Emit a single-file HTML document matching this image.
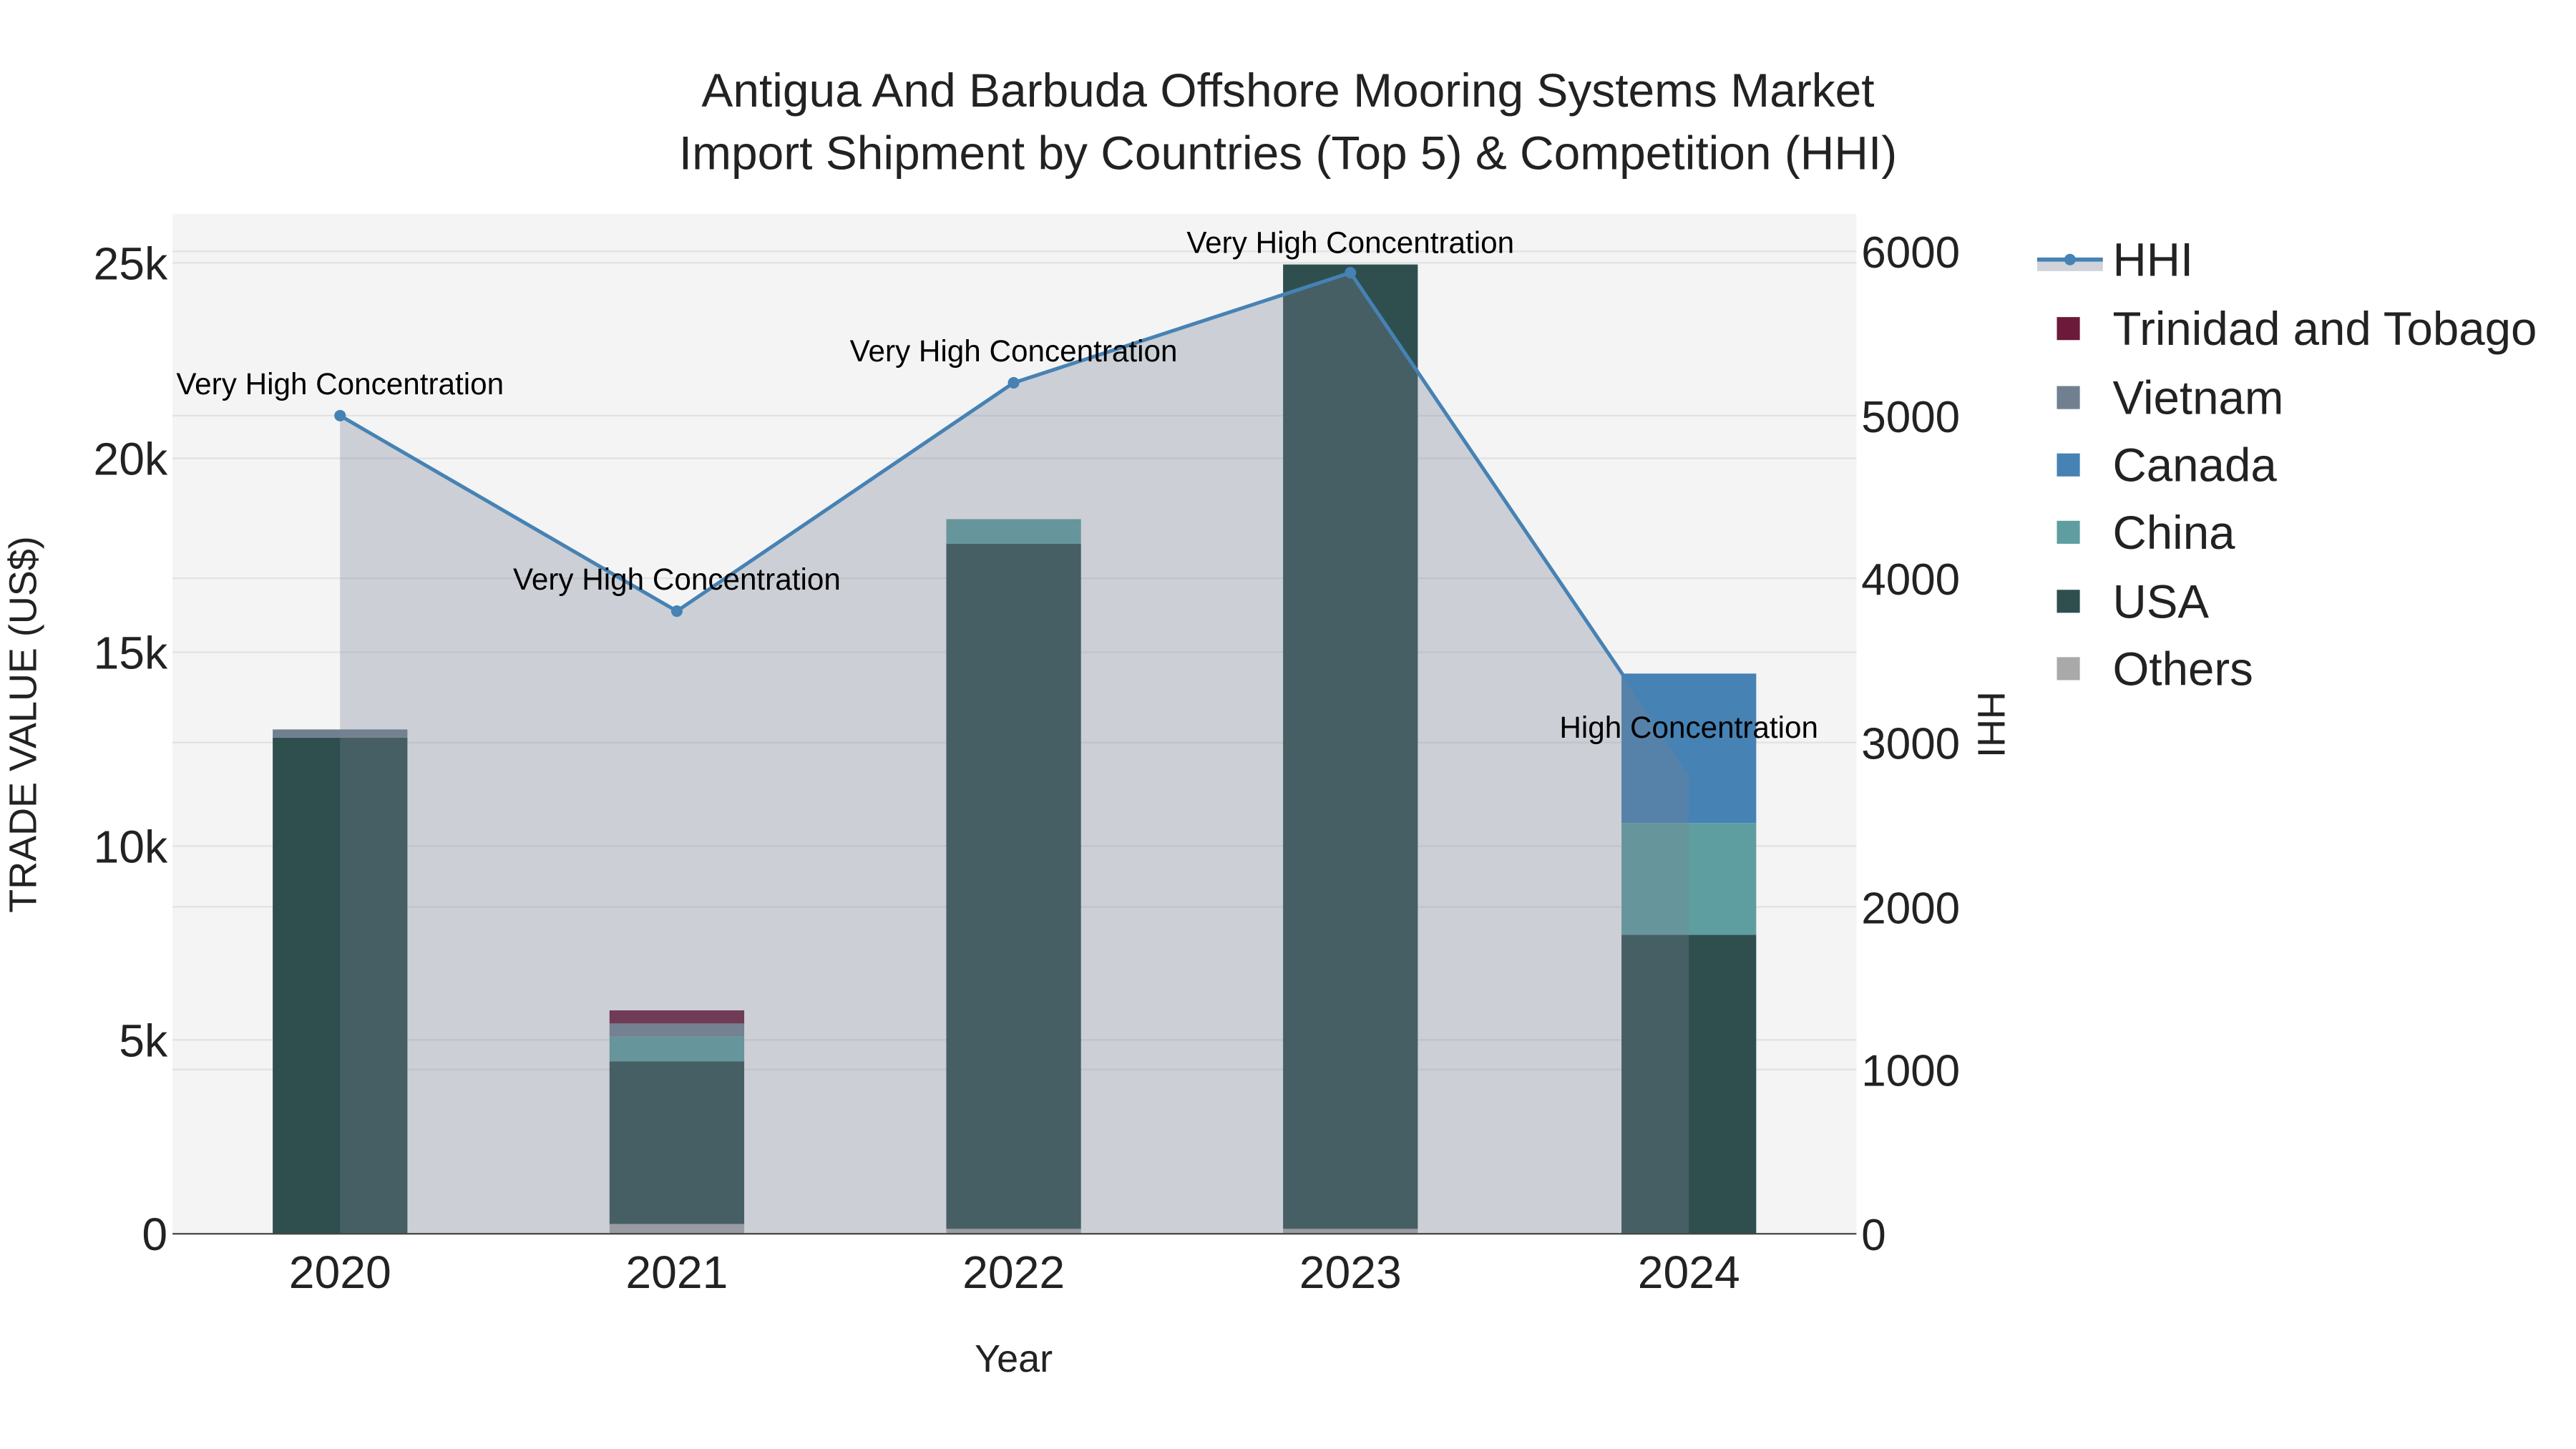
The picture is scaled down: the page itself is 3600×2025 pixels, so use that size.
<!DOCTYPE html>
<html><head><meta charset="utf-8"><style>html,body{margin:0;padding:0;background:#fff}svg{display:block}</style></head>
<body>
<svg width="3600" height="2025" viewBox="0 0 1568 882" xmlns="http://www.w3.org/2000/svg" font-family="Liberation Sans, sans-serif">
<rect width="1568" height="882" fill="#fff"/>
<rect x="105" y="130" width="1025" height="621" fill="#f4f4f4"/>
<g stroke="#e2e2e2" stroke-width="1">
<line x1="105" x2="1130" y1="633" y2="633"/><line x1="105" x2="1130" y1="515" y2="515"/><line x1="105" x2="1130" y1="397" y2="397"/><line x1="105" x2="1130" y1="279" y2="279"/><line x1="105" x2="1130" y1="160" y2="160"/>
<line x1="105" x2="1130" y1="651" y2="651"/><line x1="105" x2="1130" y1="552" y2="552"/><line x1="105" x2="1130" y1="452" y2="452"/><line x1="105" x2="1130" y1="352" y2="352"/><line x1="105" x2="1130" y1="253" y2="253"/><line x1="105" x2="1130" y1="153" y2="153"/>
</g>
<g>
<rect x="166" y="449" width="82" height="302" fill="#2f4f4f"/><rect x="166" y="444" width="82" height="5" fill="#708090"/>
<rect x="371" y="745" width="82" height="6" fill="#a9a9a9"/><rect x="371" y="646" width="82" height="99" fill="#2f4f4f"/><rect x="371" y="631" width="82" height="15" fill="#5f9ea0"/><rect x="371" y="623" width="82" height="8" fill="#708090"/><rect x="371" y="615" width="82" height="8" fill="#6b1a3a"/>
<rect x="576" y="748" width="82" height="3" fill="#a9a9a9"/><rect x="576" y="331" width="82" height="417" fill="#2f4f4f"/><rect x="576" y="316" width="82" height="15" fill="#5f9ea0"/>
<rect x="781" y="748" width="82" height="3" fill="#a9a9a9"/><rect x="781" y="161" width="82" height="587" fill="#2f4f4f"/>
<rect x="987" y="569" width="82" height="182" fill="#2f4f4f"/><rect x="987" y="501" width="82" height="68" fill="#5f9ea0"/><rect x="987" y="410" width="82" height="91" fill="#4682b4"/>
</g>
<path d="M207,253 L412,372 L617,233 L822,166 L1028,470 L1028,751 L207,751 Z" fill="rgba(120,130,150,0.32)"/>
<polyline points="207,253 412,372 617,233 822,166 1028,470" fill="none" stroke="#4682b4" stroke-width="2.2"/>
<g fill="#4682b4"><circle cx="207" cy="253" r="3.5"/><circle cx="412" cy="372" r="3.5"/><circle cx="617" cy="233" r="3.5"/><circle cx="822" cy="166" r="3.5"/></g>
<line x1="105" x2="1130" y1="751" y2="751" stroke="#444" stroke-width="1"/>
<g font-size="18.4" fill="#000" text-anchor="middle">
<text x="207" y="240">Very High Concentration</text><text x="412" y="359">Very High Concentration</text><text x="617" y="220">Very High Concentration</text><text x="822" y="154">Very High Concentration</text><text x="1028" y="449">High Concentration</text>
</g>
<g font-size="28" fill="#222" text-anchor="end">
<text x="102" y="761">0</text><text x="102" y="643">5k</text><text x="102" y="525">10k</text><text x="102" y="407">15k</text><text x="102" y="289">20k</text><text x="102" y="170">25k</text>
</g>
<g font-size="27" fill="#222" text-anchor="start">
<text x="1133" y="761">0</text><text x="1133" y="661">1000</text><text x="1133" y="562">2000</text><text x="1133" y="462">3000</text><text x="1133" y="362">4000</text><text x="1133" y="263">5000</text><text x="1133" y="163">6000</text>
</g>
<g font-size="28" fill="#222" text-anchor="middle">
<text x="207" y="784">2020</text><text x="412" y="784">2021</text><text x="617" y="784">2022</text><text x="822" y="784">2023</text><text x="1028" y="784">2024</text>
</g>
<text x="617" y="835" font-size="23.5" fill="#222" text-anchor="middle">Year</text>
<text transform="translate(22,441) rotate(-90)" font-size="23.5" fill="#222" text-anchor="middle">TRADE VALUE (US$)</text>
<text transform="translate(1204,441) rotate(90)" font-size="23.5" fill="#222" text-anchor="middle">HHI</text>
<g font-size="28.7" fill="#222" text-anchor="middle">
<text x="784" y="65">Antigua And Barbuda Offshore Mooring Systems Market</text>
<text x="784" y="103">Import Shipment by Countries (Top 5) &amp; Competition (HHI)</text>
</g>
<rect x="1240" y="157" width="40" height="8" fill="rgba(120,130,150,0.35)"/>
<line x1="1240" x2="1280" y1="158" y2="158" stroke="#4682b4" stroke-width="2.5"/><circle cx="1260" cy="158" r="3.5" fill="#4682b4"/>
<g>
<rect x="1252" y="193" width="14" height="14" fill="#6b1a3a"/><rect x="1252" y="235" width="14" height="14" fill="#708090"/><rect x="1252" y="276" width="14" height="14" fill="#4682b4"/><rect x="1252" y="317" width="14" height="14" fill="#5f9ea0"/><rect x="1252" y="359" width="14" height="14" fill="#2f4f4f"/><rect x="1252" y="400" width="14" height="14" fill="#a9a9a9"/>
</g>
<g font-size="28.5" fill="#222">
<text x="1286" y="168">HHI</text><text x="1286" y="210">Trinidad and Tobago</text><text x="1286" y="252">Vietnam</text><text x="1286" y="293">Canada</text><text x="1286" y="334">China</text><text x="1286" y="376">USA</text><text x="1286" y="417">Others</text>
</g>
</svg>
</body></html>
